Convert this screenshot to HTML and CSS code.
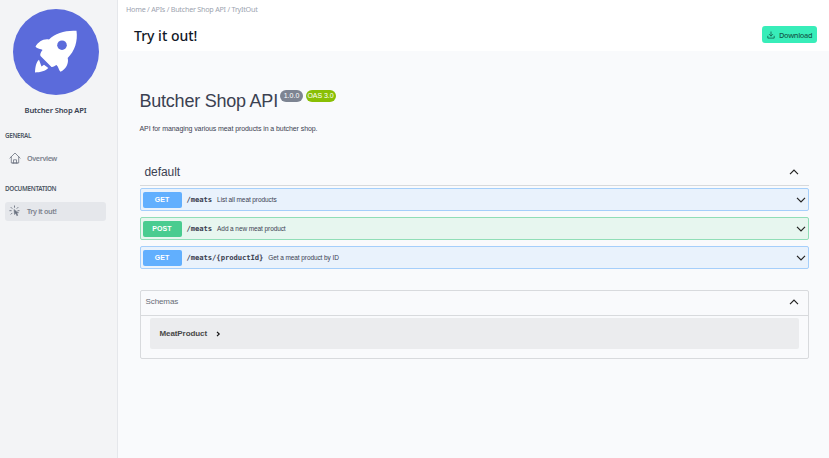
FILE: index.html
```html
<!DOCTYPE html>
<html lang="en">
<head>
<meta charset="utf-8">
<title>Butcher Shop API</title>
<link rel="stylesheet" href="styles.css">
</head>
<body>
<div class="app">
  <aside class="sidebar">
    <div class="logo">
      <svg viewBox="0 0 86 86" width="86" height="86"><circle cx="43" cy="43" r="43" fill="#5b6bdb"/><path fill="#fff" d="M63.500 21.800C53.500 21 42 24 36 30.500C30 29.500 25.500 33 22.500 37.500C24 40 28 39.500 29.500 41C27.500 43.500 26.800 45.500 27.500 47L38.500 58C40 58.500 42 56.500 43.500 56C45.500 57.500 45.500 61 47.500 62.800C53 60 56 54.500 54.700 49C61.500 42.500 65 32.500 63.500 21.800Z"/><circle cx="49" cy="36.200" r="4.800" fill="#5b6bdb"/><path fill="#fff" d="M26 50.800C23 53.500 22.300 58 22 63.500C27.500 63.300 32.500 62 35.300 59L31 55.700L28.500 57.500Z"/></svg>
    </div>
    <div class="api-name">Butcher Shop API</div>
    <div class="group general">GENERAL</div>
    <a class="item overview"><svg viewBox="0 0 12 12" width="12" height="12" fill="none" stroke="#6b7280" stroke-width=".8" stroke-linecap="round" stroke-linejoin="round"><path d="M.9 6.100 6 1l5.100 5.100M2.300 4.800V11h7.400V4.800M4.500 11V7.800h3V11M3.500 11h5"/></svg><span>Overview</span></a>
    <div class="group docs">DOCUMENTATION</div>
    <a class="item active"><svg viewBox="0 0 12 12" width="12" height="12" fill="none" stroke="#6b7280" stroke-width=".9" stroke-linecap="round" stroke-linejoin="round"><path d="M5.500.9v1.400M2 2.400l1 1M9 2.400l-1 1M.8 5.700h1.400M2 9.200l1-1M8.900 5.700h1.200"/><path fill="#6b7280" stroke-width=".5" d="M5 4.800 5.500 9.500l1.200-1.200L7.900 10.800l.9-.5-1-2.300 1.500-.2Z"/></svg><span>Try it out!</span></a>
  </aside>
  <div class="page">
    <header class="header">
      <nav class="crumbs">Home / APIs / Butcher Shop API / TryItOut</nav>
      <div class="title-row">
        <h1>Try it out!</h1>
        <button class="download"><svg viewBox="0 0 8 8" width="8" height="8" fill="none" stroke="#135e4c" stroke-width=".8" stroke-linecap="round" stroke-linejoin="round"><path d="M4 .9v4M2.300 3.400 4 5.100l1.700-1.700M.8 5.200v1.900h6.400V5.200"/></svg><span>Download</span></button>
      </div>
    </header>
    <main class="content">
      <div class="api-title"><h2>Butcher Shop API</h2><span class="badge version">1.0.0</span><span class="badge oas">OAS 3.0</span></div>
      <p class="description">API for managing various meat products in a butcher shop.</p>
      <div class="tag"><h3>default</h3><svg class="chevron" viewBox="0 0 10 10" width="10" height="10"><path d="m1 7.200 4-4 4 4"/></svg></div>
      <div class="op get"><b class="method">GET</b><code>/meats</code><span class="summary">List all meat products</span><svg class="chevron" viewBox="0 0 10 10" width="10" height="10"><path d="m1 2.800 4 4 4-4"/></svg></div>
      <div class="op post"><b class="method">POST</b><code>/meats</code><span class="summary">Add a new meat product</span><svg class="chevron" viewBox="0 0 10 10" width="10" height="10"><path d="m1 2.800 4 4 4-4"/></svg></div>
      <div class="op get"><b class="method">GET</b><code>/meats/{productId}</code><span class="summary">Get a meat product by ID</span><svg class="chevron" viewBox="0 0 10 10" width="10" height="10"><path d="m1 2.800 4 4 4-4"/></svg></div>
      <section class="schemas">
        <div class="schemas-head"><span>Schemas</span><svg class="chevron" viewBox="0 0 10 10" width="10" height="10"><path d="m1 7.200 4-4 4 4"/></svg></div>
        <div class="model"><b>MeatProduct</b><svg viewBox="0 0 6 6" width="6" height="6" fill="none" stroke="#111" stroke-width="1.200"><path d="m2 .9 2.200 2.100L2 5.100"/></svg></div>
      </section>
    </main>
  </div>
</div>
</body>
</html>
```
FILE: styles.css
```css
* { box-sizing: border-box; }
body { margin: 0; font-family: "Noto Sans", sans-serif; background: #f9fafc; }
h1, h2, h3, p { margin: 0; font-weight: 400; }
svg { display: block; flex: none; }
.app { display: flex; height: 458px; overflow: hidden; }
.sidebar { width: 118px; flex: none; background: #f3f4f6; border-right: 1px solid #e5e7eb; padding: 9px 11px 0 5px; white-space: nowrap; }
.logo { padding-left: 8px; height: 86px; }
.api-name { margin-top: 7px; height: 17px; line-height: 16px; width: 101px; text-align: center; font-size: 7.600px; font-weight: 600; color: #374151; letter-spacing: -.15px; }
.group { height: 10px; line-height: 10px; font-size: 6.300px; font-weight: 600; color: #4b5563; letter-spacing: -.32px; }
.general { margin-top: 12px; }
.docs { margin-top: 16px; }
.item { display: flex; align-items: center; gap: 6px; height: 19px; width: 101px; padding-left: 4px; border-radius: 3px; font-size: 7.200px; font-weight: 600; color: #7b818d; letter-spacing: -.37px; }
.overview { margin-top: 8px; padding-bottom: 1px; }
.active { margin-top: 8px; padding-bottom: 1px; background: #e5e7eb; }
.page { flex: 1; min-width: 0; }
.header { height: 51px; background: #fff; padding: 3px 12px 0 8px; }
.crumbs { height: 12px; line-height: 12px; font-size: 7.200px; letter-spacing: -.24px; color: #9ca3af; white-space: nowrap; }
.title-row { display: flex; justify-content: space-between; align-items: center; padding-left: 8px; height: 20px; margin-top: 11px; }
h1 { font-size: 14px; line-height: 20px; font-weight: 500; color: #111827; }
.download { display: flex; align-items: center; gap: 4px; width: 55px; height: 17px; padding: 0 0 0 5px; border: 0; border-radius: 3px; background: #38edb9; color: #135e4c; font: 500 7.400px "Noto Sans", sans-serif; letter-spacing: -.3px; margin-top: -3px; }
.content { padding: 37px 20px 0 21.500px; font-family: "Liberation Sans", sans-serif; color: #3b4151; white-space: nowrap; }
.api-title { display: flex; height: 24px; }
h2 { font-size: 18px; line-height: 26px; width: 138px; letter-spacing: -.23px; }
.badge { height: 12px; line-height: 12px; margin: 2px 0 0 2.500px; border-radius: 6px; color: #fff; font-size: 7px; text-align: center; }
.version { width: 23px; background: #7d8492; }
.oas { width: 30px; background: #89bf04; letter-spacing: -.05px; }
.description { margin-top: 12px; height: 10px; line-height: 10px; font-size: 7px; letter-spacing: -.08px; }
.tag { display: flex; align-items: center; justify-content: space-between; margin-top: 24px; height: 28px; padding: 0 10px 0 5px; border-bottom: 1px solid #d7d9dc; }
h3 { font-size: 12px; line-height: 16px; letter-spacing: -.08px; }
.chevron { margin-left: auto; fill: none; stroke: #222; stroke-width: 1.200; }
.op { display: flex; align-items: center; height: 23px; margin-bottom: 6px; padding: 0 2px; border: 1px solid #a5cffb; border-radius: 2px; background: #e9f2fc; }
.tag + .op { margin-top: 2px; }
.post { border-color: #91deb7; background: #e7f6ef; }
.method { width: 39px; height: 16px; line-height: 16px; border-radius: 2px; background: #61affe; color: #fff; font-size: 7px; text-align: center; letter-spacing: .05px; }
.post .method { background: #49cc90; }
code { margin-left: 5px; font: 700 7.200px "DejaVu Sans Mono", monospace; letter-spacing: -.06px; }
.summary { margin-left: 5px; font-size: 6.500px; letter-spacing: -.09px; }
.schemas { margin-top: 21px; height: 69px; border: 1px solid #d8dadd; border-radius: 2px; }
.schemas-head { display: flex; align-items: center; height: 25px; padding: 0 9px 3px 5px; border-bottom: 1px solid #d8dadd; font-size: 8px; letter-spacing: -.1px; color: #666b75; }
.model { display: flex; align-items: center; gap: 8px; margin: 2px 9px 0; height: 31px; padding-left: 10px; background: #ebecee; border-radius: 2px; font-size: 8px; letter-spacing: -.09px; color: #484848; }
```
